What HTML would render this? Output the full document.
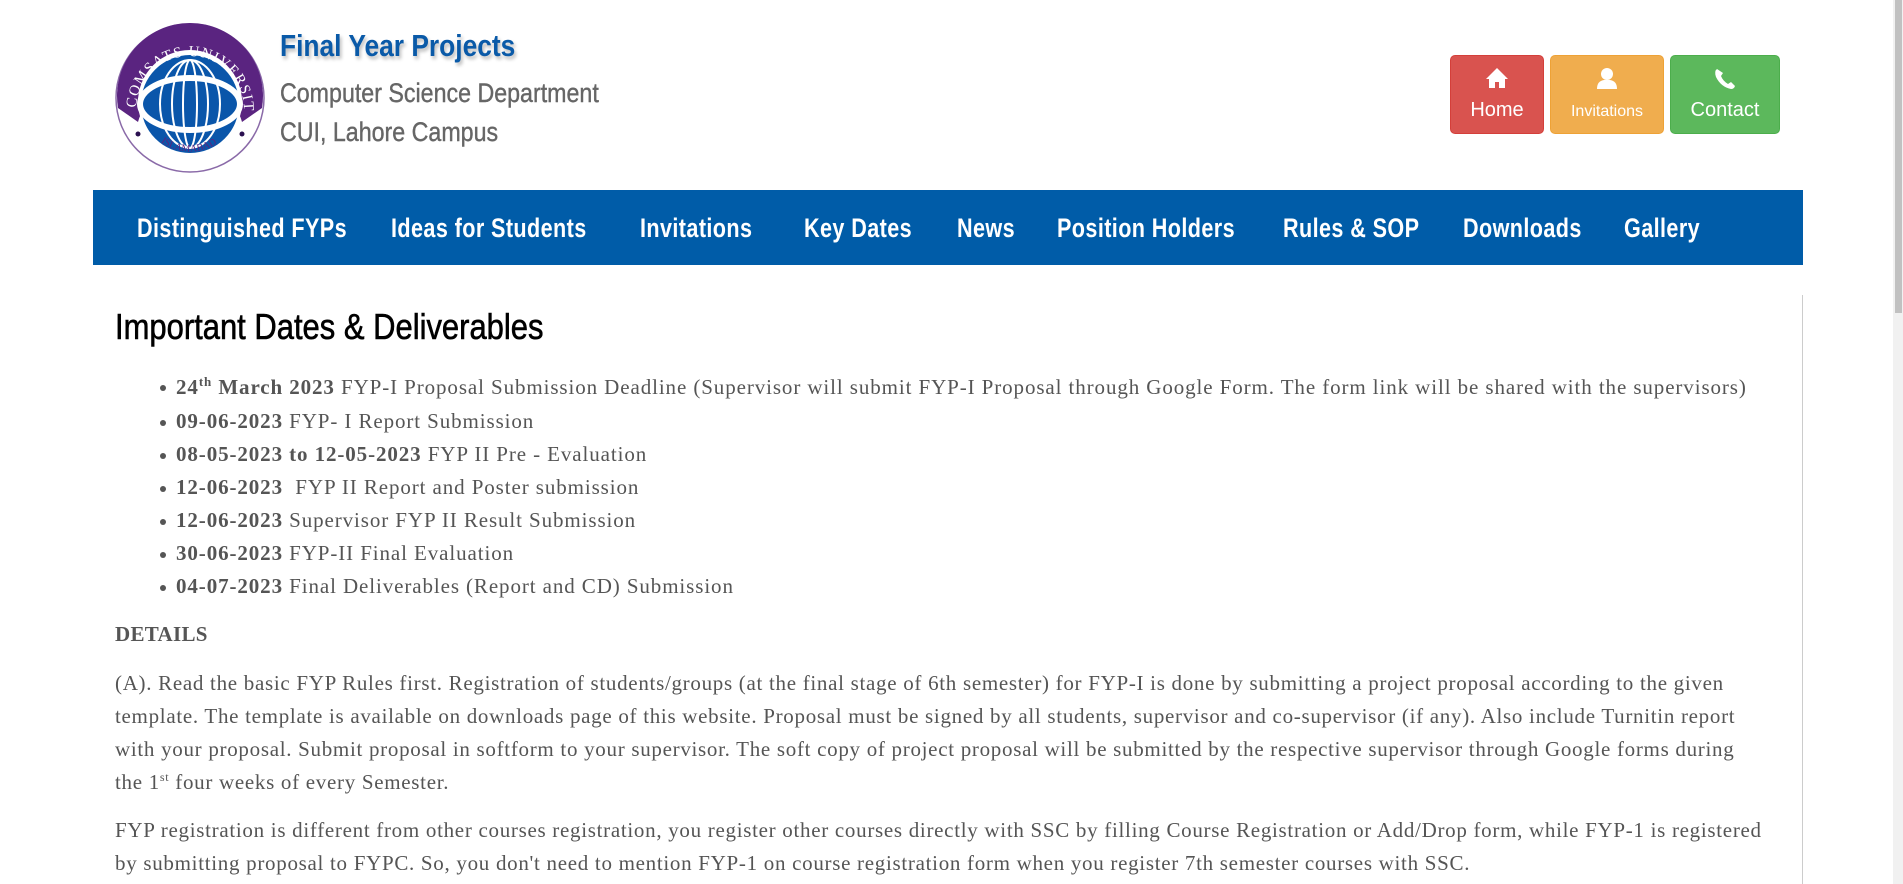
<!DOCTYPE html>
<html><head><meta charset="utf-8">
<style>
*{margin:0;padding:0;box-sizing:border-box}
html,body{width:1903px;height:884px;overflow:hidden;background:#fff}
body{position:relative;font-family:"Liberation Serif",serif;color:#555}
.abs{position:absolute;white-space:nowrap}
.sx{transform-origin:0 0;display:inline-block}
.btn{position:absolute;top:55px;height:79px;border-radius:5px;color:#fff;font-family:"Liberation Sans",sans-serif;text-align:center}
.btn svg{position:absolute;left:50%;top:11px;transform:translateX(-50%)}
.btn span{position:absolute;left:0;right:0;top:43px}
.nav{position:absolute;left:93px;top:190px;width:1710px;height:75px;background:#005ca8}
.ni{position:absolute;top:23px;color:#fff;font-family:"Liberation Sans",sans-serif;font-weight:bold;font-size:27px;transform:scaleX(.8);transform-origin:0 0;white-space:nowrap;letter-spacing:.5px}
.li{position:absolute;left:176px;font-size:21px;letter-spacing:.9px;white-space:nowrap}
.li:before{content:"";position:absolute;left:-16px;top:11px;width:6px;height:6px;border-radius:50%;background:#555}
.li b{font-weight:bold}
.p{position:absolute;left:115px;font-size:21px;letter-spacing:.7px;white-space:nowrap}
</style></head><body>

<svg class="abs" style="left:114px;top:22px" width="152" height="152" viewBox="0 0 152 152">
<defs><path id="arc" d="M22,88 A54,54 0 1 1 130,88"/><path id="arc2" d="M38,112 A50,50 0 0 0 114,112"/></defs>
<circle cx="76" cy="76" r="74" fill="#fff" stroke="#8a6aa8" stroke-width="1.5"/>
<path d="M4,86 A73,73 0 1 1 148,86 L128,100 A54,54 0 0 0 24,100 Z" fill="#5a2480"/>
<circle cx="76" cy="80" r="52" fill="#fff"/>
<circle cx="76" cy="82" r="49" fill="#0a56aa"/>
<ellipse cx="76" cy="82" rx="50" ry="26" fill="none" stroke="#fff" stroke-width="6"/>
<ellipse cx="76" cy="82" rx="30" ry="44" fill="none" stroke="#fff" stroke-width="2"/>
<ellipse cx="76" cy="82" rx="18" ry="44" fill="none" stroke="#fff" stroke-width="2"/>
<ellipse cx="76" cy="82" rx="7" ry="44" fill="none" stroke="#fff" stroke-width="2"/>
<text font-family="Liberation Serif" font-size="15" fill="#fff" letter-spacing="1"><textPath href="#arc" startOffset="2">COMSATS UNIVERSITY</textPath></text>
<text font-family="Liberation Serif" font-size="10" fill="#5a2480"><textPath href="#arc2" startOffset="12">ISLAMABAD</textPath></text>
<circle cx="24" cy="112" r="2.5" fill="#2a1050"/><circle cx="128" cy="112" r="2.5" fill="#2a1050"/>
</svg>

<div class="abs" style="left:280px;top:28px;font-family:'Liberation Sans',sans-serif;font-size:31px;font-weight:bold;color:#0a5aa8;text-shadow:2px 3px 4px #bbb"><span class="sx" style="transform:scaleX(.85)">Final Year Projects</span></div>
<div class="abs" style="left:280px;top:78px;font-family:'Liberation Sans',sans-serif;font-size:27px;color:#666;-webkit-text-stroke:.4px #666"><span class="sx" style="transform:scaleX(.86)">Computer Science Department</span></div>
<div class="abs" style="left:280px;top:117px;font-family:'Liberation Sans',sans-serif;font-size:27px;color:#666;-webkit-text-stroke:.4px #666"><span class="sx" style="transform:scaleX(.86)">CUI, Lahore Campus</span></div>

<div class="btn" style="left:1450px;width:94px;background:#d9534f;border:1px solid #d43f3a">
<svg width="24" height="22" viewBox="0 0 24 22"><path d="M12 1 L1 12 L4 12 L4 21 L10 21 L10 15 L14 15 L14 21 L20 21 L20 12 L23 12 Z" fill="#fff"/></svg>
<span style="font-size:20px">Home</span></div>
<div class="btn" style="left:1550px;width:114px;background:#f0ad4e;border:1px solid #eea236">
<svg width="22" height="24" viewBox="0 0 22 24"><circle cx="11" cy="7" r="6" fill="#fff"/><path d="M1 22 Q1 14 8 13 L14 13 Q21 14 21 22 Z" fill="#fff"/></svg>
<span style="font-size:16px;top:47px">Invitations</span></div>
<div class="btn" style="left:1670px;width:110px;background:#5cb85c;border:1px solid #4cae4c">
<svg width="24" height="24" viewBox="0 0 24 24"><path d="M4 2 Q1 4 3 10 Q8 20 18 22 Q21 22 22 19 L18 15 L15 17 Q10 14 8 9 L10 6 Z" fill="#fff"/></svg>
<span style="font-size:20px">Contact</span></div>

<div class="nav">
<div class="ni" style="left:44px">Distinguished FYPs</div>
<div class="ni" style="left:298px">Ideas for Students</div>
<div class="ni" style="left:547px">Invitations</div>
<div class="ni" style="left:711px">Key Dates</div>
<div class="ni" style="left:864px">News</div>
<div class="ni" style="left:964px">Position Holders</div>
<div class="ni" style="left:1190px">Rules &amp; SOP</div>
<div class="ni" style="left:1370px">Downloads</div>
<div class="ni" style="left:1531px">Gallery</div>
</div>

<div class="abs" style="left:1802px;top:295px;width:1px;height:589px;background:#ccc"></div>

<div class="abs" style="left:115px;top:306px;font-family:'Liberation Sans',sans-serif;font-size:36px;color:#000;-webkit-text-stroke:.6px #000"><span class="sx" style="transform:scaleX(.86)">Important Dates &amp; Deliverables</span></div>

<div class="li" style="top:374px"><b>24<sup style="font-size:13px">th</sup> March 2023</b> FYP-I Proposal Submission Deadline (Supervisor will submit FYP-I Proposal through Google Form. The form link will be shared with the supervisors)</div>
<div class="li" style="top:409px"><b>09-06-2023</b> FYP- I Report Submission</div>
<div class="li" style="top:442px"><b>08-05-2023 to 12-05-2023</b> FYP II Pre - Evaluation</div>
<div class="li" style="top:475px"><b>12-06-2023</b>&nbsp; FYP II Report and Poster submission</div>
<div class="li" style="top:508px"><b>12-06-2023</b> Supervisor FYP II Result Submission</div>
<div class="li" style="top:541px"><b>30-06-2023</b> FYP-II Final Evaluation</div>
<div class="li" style="top:574px"><b>04-07-2023</b> Final Deliverables (Report and CD) Submission</div>

<div class="p" style="top:622px;font-weight:bold;letter-spacing:.3px">DETAILS</div>
<div class="p" style="top:671px">(A). Read the basic FYP Rules first. Registration of students/groups (at the final stage of 6th semester) for FYP-I is done by submitting a project proposal according to the given</div>
<div class="p" style="top:704px">template. The template is available on downloads page of this website. Proposal must be signed by all students, supervisor and co-supervisor (if any). Also include Turnitin report</div>
<div class="p" style="top:737px">with your proposal. Submit proposal in softform to your supervisor. The soft copy of project proposal will be submitted by the respective supervisor through Google forms during</div>
<div class="p" style="top:770px">the 1<sup style="font-size:12px">st</sup> four weeks of every Semester.</div>
<div class="p" style="top:818px">FYP registration is different from other courses registration, you register other courses directly with SSC by filling Course Registration or Add/Drop form, while FYP-1 is registered</div>
<div class="p" style="top:851px">by submitting proposal to FYPC. So, you don't need to mention FYP-1 on course registration form when you register 7th semester courses with SSC.</div>

<div class="abs" style="left:1893px;top:0;width:10px;height:884px;background:#f1f1f1"></div>
<div class="abs" style="left:1895px;top:0;width:7px;height:313px;background:#c1c1c1"></div>
</body></html>
